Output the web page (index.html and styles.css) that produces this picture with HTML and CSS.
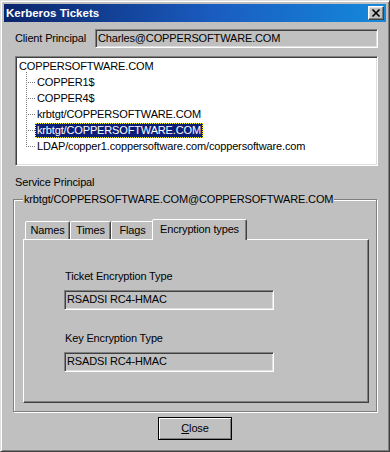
FILE: index.html
```html
<!DOCTYPE html>
<html lang="en">
<head>
<meta charset="utf-8">
<title>Kerberos Tickets</title>
<link rel="stylesheet" href="styles.css">
</head>
<body>
<div class="window">
  <div class="titlebar">
    <span class="title">Kerberos Tickets</span>
    <button class="title-close" aria-label="Close">
      <svg width="16" height="14" viewBox="0 0 16 14"><path d="M4.5 3.5 L11.5 10.5 M11.5 3.5 L4.5 10.5" stroke="#000" stroke-width="1.7" fill="none"/></svg>
    </button>
  </div>
  <div class="content">
    <div class="client-row">
      <span class="client-label">Client Principal</span>
      <div class="field client-field">Charles@COPPERSOFTWARE.COM</div>
    </div>
    <div class="tree">
      <div class="root-node"><span class="node-label">COPPERSOFTWARE.COM</span></div>
      <ul class="children">
        <li><span class="node-label">COPPER1$</span></li>
        <li><span class="node-label">COPPER4$</span></li>
        <li><span class="node-label">krbtgt/COPPERSOFTWARE.COM</span></li>
        <li><span class="node-label selected">krbtgt/COPPERSOFTWARE.COM</span></li>
        <li><span class="node-label">LDAP/copper1.coppersoftware.com/coppersoftware.com</span></li>
      </ul>
    </div>
    <div class="service-label">Service Principal</div>
    <fieldset class="group">
      <legend class="group-title">krbtgt/COPPERSOFTWARE.COM@COPPERSOFTWARE.COM</legend>
      <div class="tabs">
        <div class="tab tab-names">Names</div>
        <div class="tab tab-times">Times</div>
        <div class="tab tab-flags">Flags</div>
        <div class="tab tab-enc active">Encryption types</div>
      </div>
      <div class="panel">
        <div class="panel-label">Ticket Encryption Type</div>
        <div class="field enc-field">RSADSI RC4-HMAC</div>
        <div class="panel-label second">Key Encryption Type</div>
        <div class="field enc-field">RSADSI RC4-HMAC</div>
      </div>
    </fieldset>
    <div class="actions">
      <button class="btn default"><u>C</u>lose</button>
    </div>
  </div>
</div>
</body>
</html>
```
FILE: styles.css
```css
* { box-sizing: border-box; }
html, body { margin: 0; padding: 0; background: #c0c0c0; }
body {
  font-family: "Liberation Sans", Arial, sans-serif;
  font-size: 11px;
  letter-spacing: -0.15px;
  color: #000;
}
.window {
  width: 390px;
  height: 452px;
  background: #c0c0c0;
  border: 1px solid;
  border-color: #dfdfdf #404040 #404040 #dfdfdf;
  box-shadow: inset 1px 1px 0 #fff, inset -1px -1px 0 #808080;
  padding: 3px;
}
.titlebar {
  height: 18px;
  display: flex;
  align-items: center;
  justify-content: space-between;
  padding: 0 2px 0 2px;
  background: linear-gradient(90deg, #0a246a 0%, #1a5cc0 55%, #1489dc 100%);
}
.title {
  color: #fff;
  font-weight: bold;
  font-size: 11.5px;
  letter-spacing: 0;
}
.title-close {
  width: 16px;
  height: 14px;
  padding: 0;
  margin: 0;
  border: 1px solid;
  border-color: #fff #404040 #404040 #fff;
  box-shadow: inset -1px -1px 0 #808080, inset 1px 1px 0 #dfdfdf;
  background: #c0c0c0;
  display: block;
  position: relative;
}
.title-close svg { position: absolute; left: -1px; top: -1px; }
.content {
  padding: 7px 8px 0 11px;
}
.client-row {
  display: flex;
  align-items: center;
  height: 19px;
}
.client-label {
  width: 80px;
  padding-bottom: 2px;
}
.field {
  background: #c0c0c0;
  border: 1px solid;
  border-color: #808080 #fff #fff #808080;
  box-shadow: inset 1px 1px 0 #404040, inset -1px -1px 0 #dfdfdf;
  display: flex;
  align-items: center;
  padding: 0 0 2px 2px;
  white-space: nowrap;
}
.client-field {
  flex: 1;
  height: 19px;
}
.tree {
  margin-top: 8px;
  height: 110px;
  background: #fff;
  border: 1px solid;
  border-color: #808080 #fff #fff #808080;
  box-shadow: inset 1px 1px 0 #404040, inset -1px -1px 0 #dfdfdf;
  padding: 1px;
}
.root-node {
  height: 16px;
  display: flex;
  align-items: center;
}
.node-label {
  display: inline-block;
  height: 15px;
  line-height: 15px;
  padding: 0 2px;
  white-space: nowrap;
}
.children {
  list-style: none;
  margin: 0;
  padding: 0 0 0 9px;
}
.children li {
  position: relative;
  height: 16px;
  display: flex;
  align-items: center;
  padding-left: 9px;
}
.children li::before {
  content: "";
  position: absolute;
  left: 0;
  top: -8px;
  width: 8px;
  height: 16px;
  border-left: 1px dotted #808080;
  border-bottom: 1px dotted #808080;
}
.children li:first-child::before {
  top: -2px;
  height: 10px;
}
.node-label.selected {
  background: #0a1e78;
  color: #fff;
  outline: 1px dotted #ffff00;
  outline-offset: -1px;
}
.service-label {
  margin-top: 9px;
  line-height: 14px;
}
.group {
  margin: 3px 1px 0 -2px;
  padding: 12px 7px 8px 9px;
  border: 1px solid #808080;
  box-shadow: 1px 1px 0 #fff, inset 1px 1px 0 #fff;
  min-width: 0;
}
.group-title {
  padding: 0 1px;
  margin: 0;
  line-height: 15px;
  background: #c0c0c0;
  white-space: nowrap;
}
.tabs {
  display: flex;
  align-items: flex-end;
  height: 20px;
  padding-left: 2px;
}
.tab {
  height: 18px;
  border: 1px solid;
  border-bottom: none;
  border-color: #fff #404040 transparent #fff;
  box-shadow: inset -1px 0 0 #808080;
  border-radius: 2px 2px 0 0;
  text-align: center;
  line-height: 16px;
  background: #c0c0c0;
  white-space: nowrap;
}
.tab-names { width: 45px; }
.tab-times { width: 41px; }
.tab-flags { width: 43px; }
.tab.active {
  width: 95px;
  height: 21px;
  margin-left: -2px;
  margin-bottom: -1px;
  position: relative;
  z-index: 1;
  line-height: 18px;
}
.panel {
  height: 164px;
  border: 1px solid;
  border-color: #fff #404040 #404040 #fff;
  box-shadow: inset -1px -1px 0 #808080;
  padding: 29px 0 0 40px;
}
.panel-label {
  line-height: 14px;
  padding-left: 1px;
}
.panel-label.second { margin-top: 21px; }
.enc-field {
  width: 210px;
  height: 20px;
  margin-top: 7px;
}
.actions {
  display: flex;
  justify-content: center;
  margin-top: 5px;
  padding-right: 3px;
}
.btn {
  width: 74px;
  height: 23px;
  font-family: inherit;
  font-size: 11px;
  letter-spacing: -0.15px;
  color: #000;
  background: #c0c0c0;
  border: 1px solid #000;
  box-shadow: inset 1px 1px 0 #fff, inset -1px -1px 0 #808080;
  padding: 0 0 1px 0;
}
.btn u { text-decoration: underline; text-underline-offset: 1px; }
```
